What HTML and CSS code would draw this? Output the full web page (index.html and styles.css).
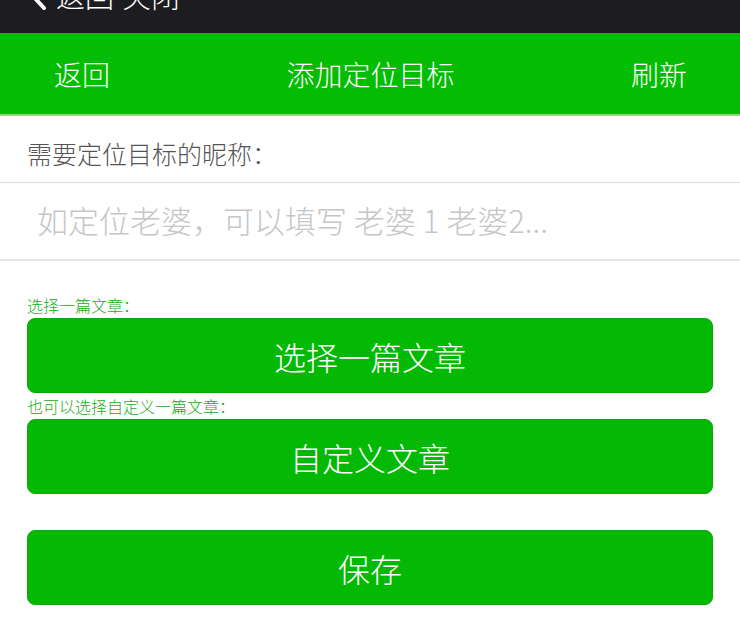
FILE: index.html
```html
<!DOCTYPE html>
<html lang="zh-CN">
<head>
<meta charset="utf-8">
<title>添加定位目标</title>
<link rel="stylesheet" href="styles.css">
</head>
<body>
<div class="topbar">
  <div class="topbar-inner">
    <svg class="chev" width="20" height="30" viewBox="0 0 20 30"><path d="M16 2 L4 15 L16 28" fill="none" stroke="#fff" stroke-width="4" stroke-linecap="round" stroke-linejoin="round"/></svg>
    <span class="top-text">返回</span>
    <span class="top-text">关闭</span>
  </div>
</div>
<div class="navbar">
  <span class="nav-item">返回</span>
  <span class="nav-title">添加定位目标</span>
  <span class="nav-item">刷新</span>
</div>
<div class="field-label">需要定位目标的昵称：</div>
<div class="field-input">
  <input class="nick" type="text" placeholder="如定位老婆，可以填写 老婆 1 老婆2...">
</div>
<div class="actions">
  <div class="hint first">选择一篇文章：</div>
  <button class="btn">选择一篇文章</button>
  <div class="hint">也可以选择自定义一篇文章：</div>
  <button class="btn">自定义文章</button>
  <button class="btn save">保存</button>
</div>
</body>
</html>
```
FILE: styles.css
```css
* { box-sizing: border-box; }
html, body { margin: 0; padding: 0; background: #fff; }
body {
  font-family: "Noto Sans CJK SC", "Noto Sans", sans-serif;
  font-weight: 300;
  width: 740px;
  overflow: hidden;
}
.topbar {
  height: 33px;
  background: #1c1c21;
  overflow: hidden;
}
.topbar-inner {
  display: flex;
  align-items: center;
  height: 40px;
  margin-top: -25px;
  padding-left: 28px;
  gap: 8px;
}
.chev { flex: none; }
.top-text {
  color: #fff;
  font-size: 29px;
  line-height: 40px;
}
.navbar {
  height: 83px;
  background: #04bd02;
  border-bottom: 2px solid #7be07a;
  display: flex;
  align-items: center;
  justify-content: space-between;
  padding: 0 53px 0 54px;
}
.nav-item, .nav-title {
  color: #fff;
  font-size: 28px;
  line-height: 40px;
}
.field-label {
  height: 67px;
  padding: 21px 0 0 27px;
  font-size: 25px;
  line-height: 32px;
  color: #555;
  border-bottom: 1px solid #dcdcdc;
}
.field-input {
  height: 78px;
  border-bottom: 2px solid #e6e6e6;
  display: flex;
  align-items: center;
  padding: 0 0 4px 37px;
}
.nick {
  border: none;
  outline: none;
  width: 100%;
  font-family: "Noto Sans CJK SC", "Noto Sans", sans-serif;
  font-weight: 300;
  font-size: 31px;
  padding: 0;
  background: transparent;
  color: #333;
}
.nick::placeholder { color: #c6c6c6; }
.actions {
  display: flex;
  flex-direction: column;
  padding: 0 27px;
}
.hint {
  font-size: 16px;
  line-height: 26px;
  color: #16ad16;
}
.hint.first { margin-top: 31px; }
.btn {
  height: 75px;
  border: 1px solid #0aa80a;
  border-radius: 8px;
  background: #04b904;
  color: #fff;
  font-family: "Noto Sans CJK SC", "Noto Sans", sans-serif;
  font-weight: 300;
  font-size: 32px;
  padding: 0;
}
.btn.save { margin-top: 36px; }
```
